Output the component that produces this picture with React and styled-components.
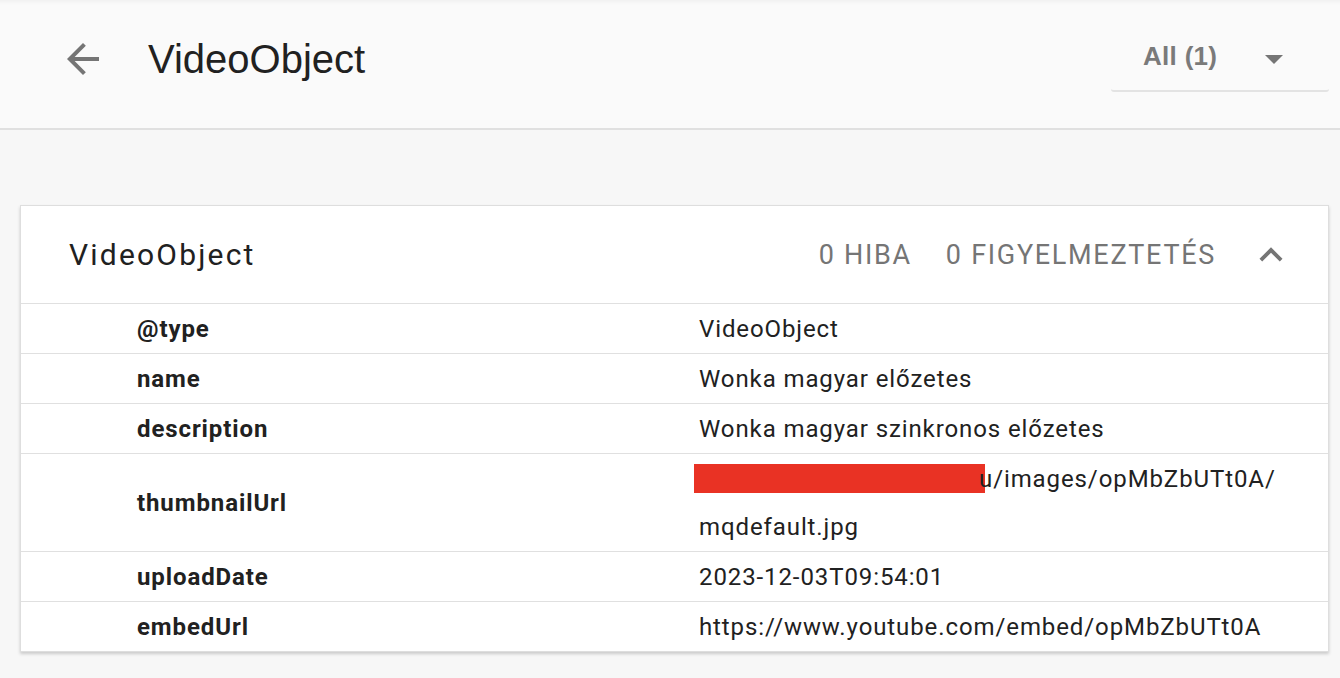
import styled, { createGlobalStyle } from "styled-components";

const GlobalStyle = createGlobalStyle`
    html, body {
        margin: 0;
        padding: 0;
        background: #f7f7f7;
        font-family: Roboto, "Noto Sans", sans-serif;
        color: #212121;
    }
`;

const Page = styled.div`
    min-height: 678px;
    background: #f7f7f7;
`;

const Header = styled.header`
    height: 128px;
    display: flex;
    align-items: center;
    padding: 0 11px 0 59px;
    background: #fafafa;
    border-bottom: 2px solid #e0e0e0;
    box-shadow: inset 0 5px 5px -4px rgba(0, 0, 0, 0.06);
`;

const BackButton = styled.button`
    width: 48px;
    height: 48px;
    padding: 0;
    margin-top: -10px;
    border: none;
    background: none;
    cursor: pointer;
    display: flex;
    align-items: center;
    justify-content: center;
`;

const PageTitle = styled.h1`
    margin: -10px 0 0 41px;
    font-family: "Liberation Sans", Arial, sans-serif;
    font-weight: 400;
    font-size: 40px;
    color: #212121;
    flex: 1;
`;

const Select = styled.div`
    width: 218px;
    height: 91px;
    box-sizing: border-box;
    margin-top: -36px;
    padding: 0 46px 0 32px;
    display: flex;
    align-items: flex-end;
    justify-content: space-between;
    border-bottom: 2px solid #e3e3e3;
    border-radius: 0 0 3px 3px;
`;

const SelectLabel = styled.span`
    font-family: "Liberation Sans", Arial, sans-serif;
    font-size: 26px;
    font-weight: 700;
    letter-spacing: 0.3px;
    color: #7a7a7a;
    line-height: 40px;
    margin-bottom: 14px;
`;

const DropArrow = styled.svg`
    margin-bottom: 26px;
`;

const Main = styled.main`
    padding: 75px 11px 24px 20px;
`;

const Card = styled.section`
    background: #fff;
    border: 1px solid #dedede;
    box-shadow: 0 2px 3px rgba(0, 0, 0, 0.18);
`;

const CardHeader = styled.div`
    height: 97px;
    display: flex;
    align-items: center;
    padding: 0 34px 0 48px;
    border-bottom: 1px solid #e0e0e0;
`;

const CardTitle = styled.h2`
    margin: 0;
    flex: 1;
    font-size: 30px;
    font-weight: 400;
    letter-spacing: 2.2px;
    color: #212121;
`;

const Count = styled.span`
    font-size: 27px;
    font-weight: 400;
    letter-spacing: 1.7px;
    text-transform: uppercase;
    color: #757575;
    margin-left: ${(p) => p.$gap}px;
`;

const Toggle = styled.svg`
    margin-left: 32px;
`;

const Row = styled.div`
    display: grid;
    grid-template-columns: 562px 1fr;
    padding: 0.5px 40px 0.5px 116px;
    border-bottom: ${(p) => (p.$last ? "none" : "1px solid #e0e0e0")};
    font-size: 24px;
    letter-spacing: 0.9px;
    line-height: 48px;
    align-items: center;
`;

const Key = styled.div`
    font-weight: 700;
    color: #212121;
`;

const Value = styled.div`
    color: #212121;
`;

const Redacted = styled.span`
    display: inline-block;
    width: 291px;
    height: 29px;
    margin: 0 -6px 0 -5px;
    vertical-align: -6px;
    background: #e93224;
`;

const rows = [
    ["@type", "VideoObject"],
    ["name", "Wonka magyar előzetes"],
    ["description", "Wonka magyar szinkronos előzetes"],
    [
        "thumbnailUrl",
        <>
            <Redacted />
            u/images/opMbZbUTt0A/<wbr />mqdefault.jpg
        </>,
    ],
    ["uploadDate", "2023-12-03T09:54:01"],
    ["embedUrl", "https://www.youtube.com/embed/opMbZbUTt0A"],
];

export default function App() {
    return (
        <Page>
            <GlobalStyle />
            <Header>
                <BackButton aria-label="Vissza">
                    <svg width="48" height="48" viewBox="0 0 24 24">
                        <path
                            fill="#757575"
                            d="M20 11H7.83l5.59-5.59L12 4l-8 8 8 8 1.41-1.41L7.83 13H20v-2z"
                        />
                    </svg>
                </BackButton>
                <PageTitle>VideoObject</PageTitle>
                <Select>
                    <SelectLabel>All (1)</SelectLabel>
                    <DropArrow width="18" height="9" viewBox="0 0 18 9">
                        <path fill="#757575" d="M0 0h18L9 9z" />
                    </DropArrow>
                </Select>
            </Header>
            <Main>
                <Card>
                    <CardHeader>
                        <CardTitle>VideoObject</CardTitle>
                        <Count $gap={0}>0 hiba</Count>
                        <Count $gap={34}>0 figyelmeztetés</Count>
                        <Toggle width="46" height="46" viewBox="0 0 24 24">
                            <path
                                fill="#757575"
                                d="M12 8l-6 6 1.41 1.41L12 10.83l4.59 4.58L18 14z"
                            />
                        </Toggle>
                    </CardHeader>
                    {rows.map(([k, v], i) => (
                        <Row key={k} $last={i === rows.length - 1}>
                            <Key>{k}</Key>
                            <Value>{v}</Value>
                        </Row>
                    ))}
                </Card>
            </Main>
        </Page>
    );
}
